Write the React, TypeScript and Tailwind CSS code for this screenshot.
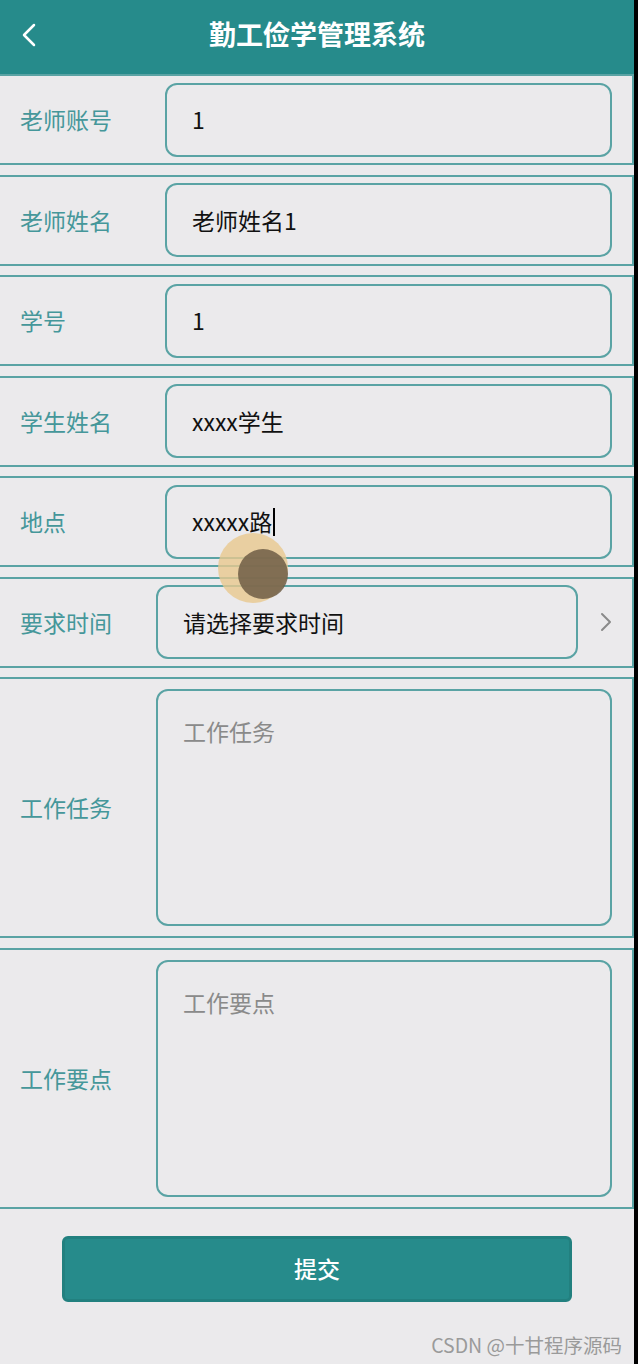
import { ChevronLeft, ChevronRight } from "lucide-react";

const font = { fontFamily: '"Noto Sans CJK SC", "Noto Sans", sans-serif' };

function Row({ label, value, caret }: { label: string; value: string; caret?: boolean }) {
  return (
    <div className="h-[91px] flex items-center border-y-2 border-r-2 border-[#5aa3a4]">
      <div className="w-[165px] pl-5 text-[23px] text-[#45979a]">{label}</div>
      <div className="w-[447px] h-[74px] rounded-xl border-2 border-[#5aa3a4] flex items-center pl-[25px] text-[23px] text-[#111]">
        {value}
        {caret && <span className="ml-px inline-block w-[2px] h-[28px] bg-black" />}
      </div>
    </div>
  );
}

function AreaRow({ label, placeholder }: { label: string; placeholder: string }) {
  return (
    <div className="h-[261px] flex items-center border-y-2 border-r-2 border-[#5aa3a4]">
      <div className="w-[156px] pl-5 text-[23px] text-[#45979a]">{label}</div>
      <div className="w-[456px] h-[237px] rounded-xl border-2 border-[#5aa3a4] pl-[25px] pt-[23px] text-[23px] text-[#8a8a8a]">
        {placeholder}
      </div>
    </div>
  );
}

export default function App() {
  return (
    <div className="relative w-[638px] h-[1364px] bg-black flex overflow-hidden" style={font}>
      <div className="w-[634px] h-full bg-[#ebeaec] flex flex-col">
        <header className="h-[74px] bg-[#268b8b] relative flex items-center justify-center pb-[6px]">
          <ChevronLeft className="absolute left-[9px] top-[15px] size-[40px] text-white" strokeWidth={1.5} />
          <h1 className="text-white text-[27px] font-bold">勤工俭学管理系统</h1>
        </header>
        <div className="flex flex-col gap-[9.5px]">
          <Row label="老师账号" value="1" />
          <Row label="老师姓名" value="老师姓名1" />
          <Row label="学号" value="1" />
          <Row label="学生姓名" value="xxxx学生" />
          <Row label="地点" value="xxxxx路" caret />
          <div className="h-[91px] flex items-center border-y-2 border-r-2 border-[#5aa3a4]">
            <div className="w-[156px] pl-5 text-[23px] text-[#45979a]">要求时间</div>
            <div className="w-[422px] h-[74px] rounded-xl border-2 border-[#5aa3a4] flex items-center pl-[25px] text-[23px] text-[#111]">
              请选择要求时间
            </div>
            <ChevronRight className="ml-[12px] size-[32px] text-[#8a8a8a]" strokeWidth={1.5} />
          </div>
          <AreaRow label="工作任务" placeholder="工作任务" />
          <AreaRow label="工作要点" placeholder="工作要点" />
        </div>
        <div className="pt-[27px] pl-[62px]">
          <button className="w-[510px] h-[66px] rounded-md bg-[#268b8b] border-[3px] border-[#22807f] text-white text-[23px] font-medium">
            提交
          </button>
        </div>
      </div>
      <div className="absolute left-[218px] top-[533px] size-[70px] rounded-full bg-[#e9c88f]/80" />
      <div className="absolute left-[238px] top-[549px] size-[50px] rounded-full bg-[#6f5d45]/85" />
      <div className="absolute right-[16px] bottom-[5px] text-[19.5px] text-[#9a9a9a]">CSDN @十甘程序源码</div>
    </div>
  );
}
